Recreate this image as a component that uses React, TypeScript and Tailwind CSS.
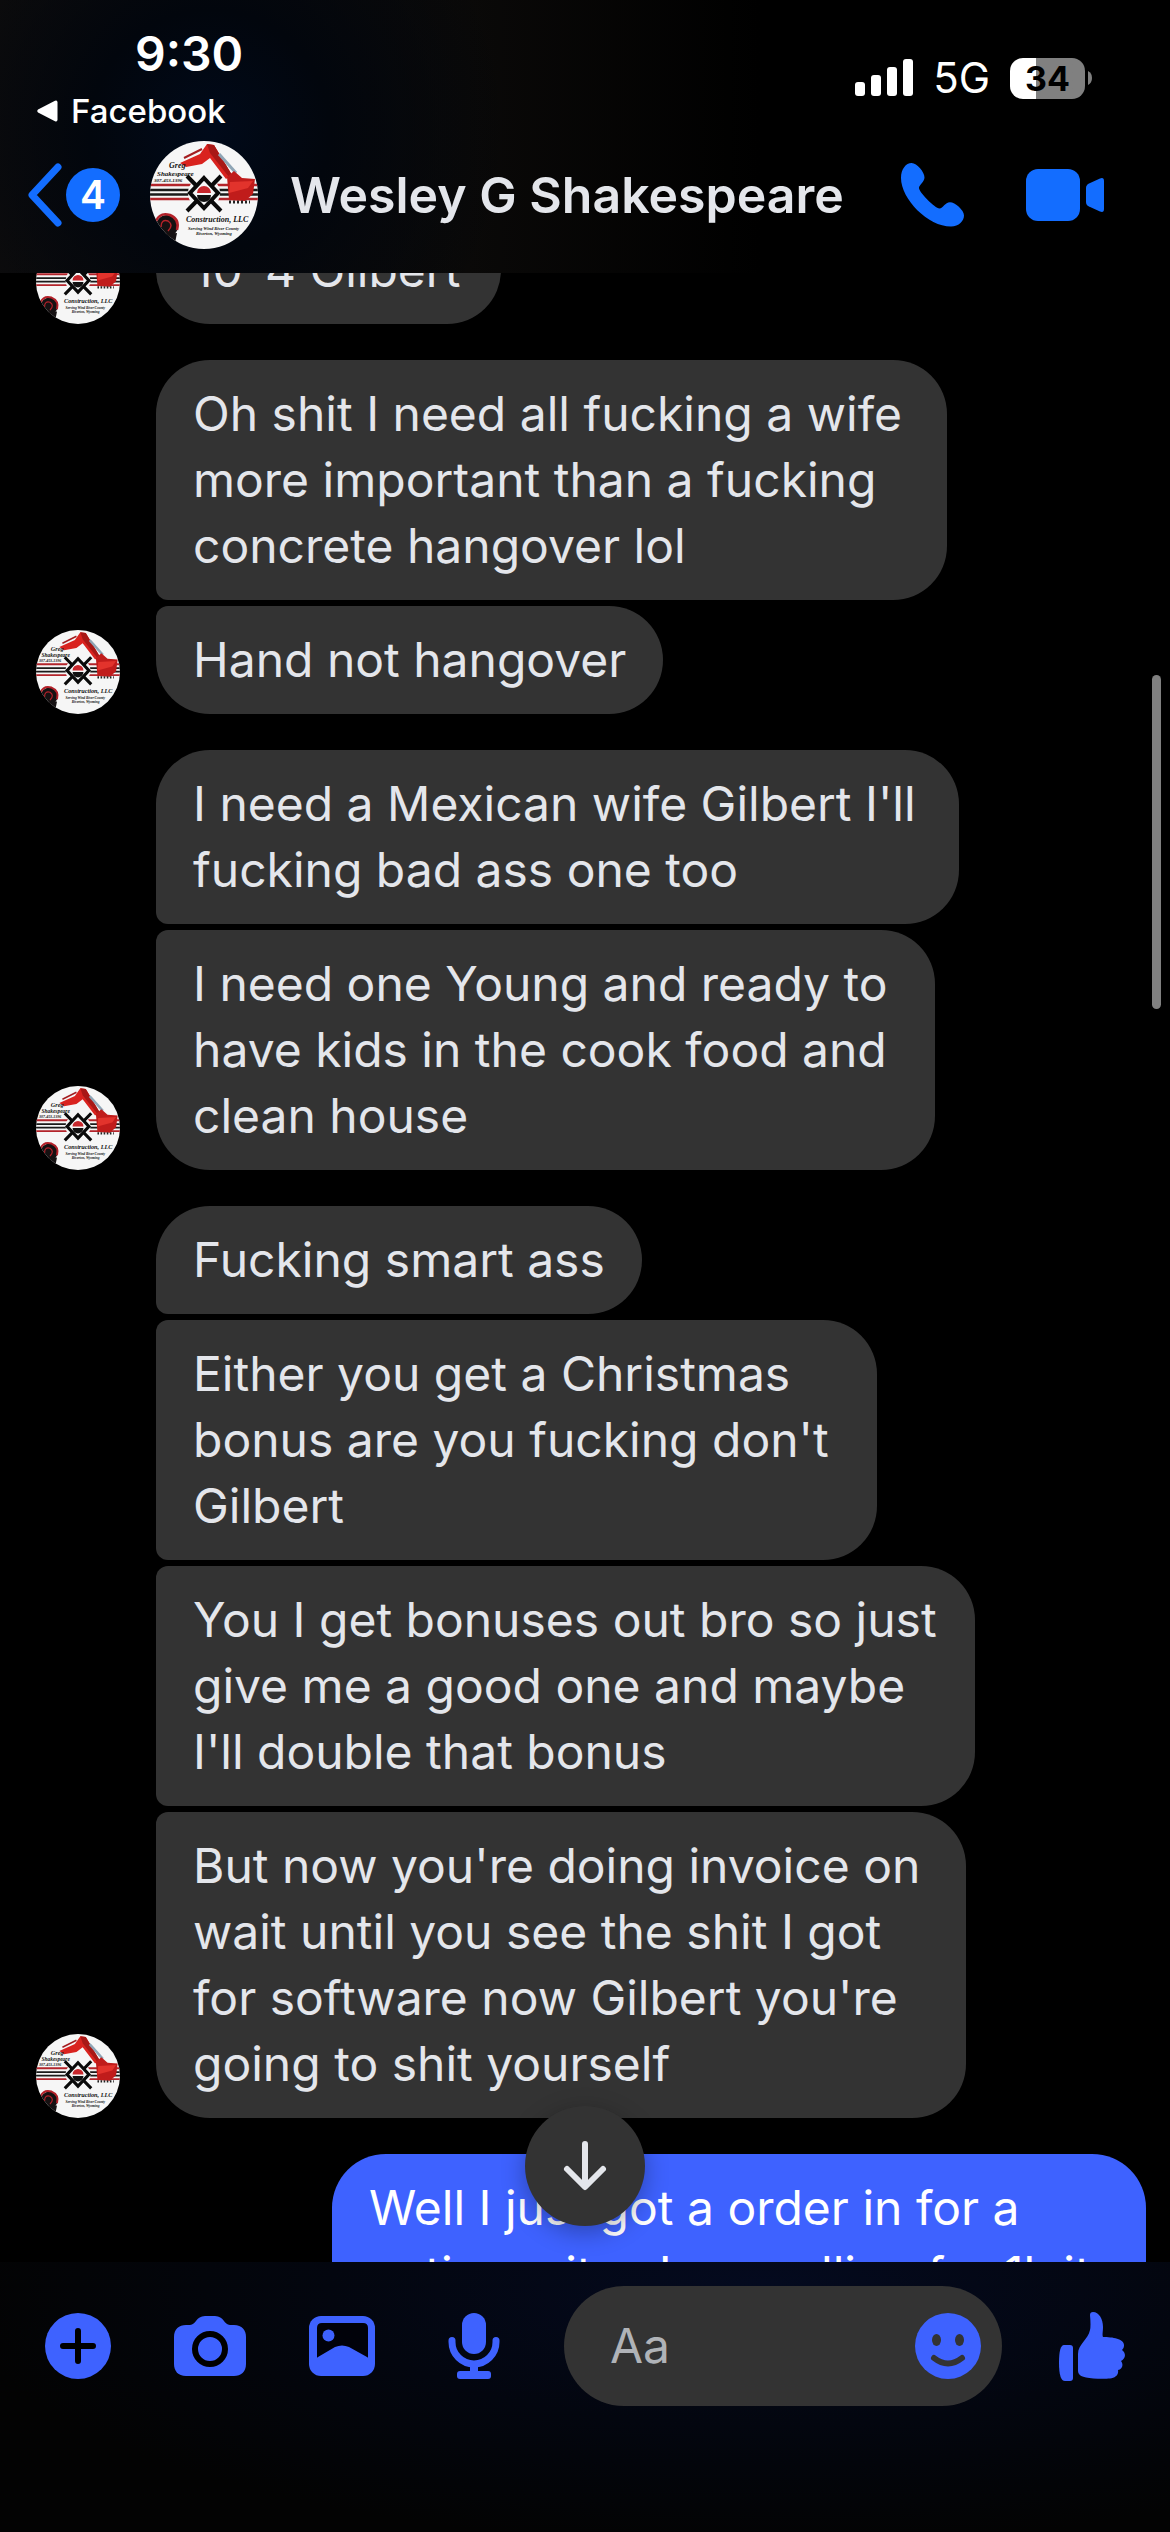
import React, { useState } from 'react';

type Corner = 'single' | 'first' | 'middle' | 'last';

interface Message {
  text: string;
  // multi-line bubbles keep the width the wrapped text asked for
  width?: string;
}

const GROUPS: Message[][] = [
  [{ text: '10-4 Gilbert', width: 'w-[345px]' }],
  [
    { text: 'Oh shit I need all fucking a wife\nmore important than a fucking\nconcrete hangover lol', width: 'w-[791px]' },
    { text: 'Hand not hangover' },
  ],
  [
    { text: "I need a Mexican wife Gilbert I'll\nfucking bad ass one too", width: 'w-[803px]' },
    { text: 'I need one Young and ready to\nhave kids in the cook food and\nclean house', width: 'w-[779px]' },
  ],
  [
    { text: 'Fucking smart ass' },
    { text: "Either you get a Christmas\nbonus are you fucking don't\nGilbert", width: 'w-[721px]' },
    { text: "You I get bonuses out bro so just\ngive me a good one and maybe\nI'll double that bonus", width: 'w-[819px]' },
    { text: "But now you're doing invoice on\nwait until you see the shit I got\nfor software now Gilbert you're\ngoing to shit yourself", width: 'w-[810px]' },
  ],
];

const CORNERS: Record<Corner, string> = {
  single: 'rounded-[54px]',
  first: 'rounded-[54px] rounded-bl-[12px]',
  middle: 'rounded-[54px] rounded-l-[12px]',
  last: 'rounded-[54px] rounded-tl-[12px]',
};

function cornerFor(index: number, count: number): Corner {
  if (count === 1) return 'single';
  if (index === 0) return 'first';
  return index === count - 1 ? 'last' : 'middle';
}

function Avatar({ className }: { className: string }) {
  return (
    <svg viewBox="0 0 108 108" className={`shrink-0 rounded-full ${className}`} role="img" aria-label="Wesley G Shakespeare">
      <rect width="108" height="108" fill="#f6f6f6" />
      {/* stripes */}
      <path d="M0 44H108M0 58H108" stroke="#b3242b" strokeWidth="2.5" />
      <path d="M0 49H108M0 53.500H108" stroke="#1a1a1a" strokeWidth="2.5" />
      {/* excavator arm and bucket */}
      <path d="M34 17L52 8" stroke="#a31d20" strokeWidth="2" />
      <path d="M30 22L50 13L57 3L64 4L82 34L76 38L60 17L52 23L36 26Z" fill="#d9231f" />
      <path d="M57 3L64 4L82 34L79 36L60 12Z" fill="#a81816" />
      <path d="M69 13L86 32" stroke="#8fa5b5" strokeWidth="3" />
      <path d="M77 36L84 30L92 37L105 38L103 53L95 60L79 59Z" fill="#c01c1b" />
      <path d="M80 41L103 40L98 47L79 52Z" fill="#e2332c" />
      <path d="M79 61H100" stroke="#222" strokeWidth="3" strokeDasharray="2 2" />
      {/* brand mark */}
      <circle cx="54" cy="52" r="16" fill="#f6f6f6" />
      <path d="M37 35L71 70M71 35L37 70" stroke="#0a0a0a" strokeWidth="4" />
      <path d="M54 37L68 52L54 67L40 52Z" fill="#f6f6f6" stroke="#0a0a0a" strokeWidth="4" />
      <path d="M47 52A7 7 0 0 1 61 52Z" fill="#c8282d" />
      <path d="M47 54A7 7 0 0 0 61 54Z" fill="#111" />
      {/* rose */}
      <circle cx="17" cy="85" r="11" fill="#151112" />
      <path d="M6 80Q10 71 20 74Q30 78 27 89" fill="none" stroke="#b32129" strokeWidth="2.5" />
      <path d="M11 86Q11 78 18 80Q24 84 18 90" fill="none" stroke="#b32129" strokeWidth="1.5" />
      <path d="M14 93L27 92L25 102Z" fill="#151112" />
      <g fill="#111" fontFamily="Liberation Serif, serif" fontStyle="italic" fontWeight="700">
        <text x="19" y="27" fontSize="8">Greg</text>
        <text x="7" y="35" fontSize="7">Shakespeare</text>
        <text x="4" y="41" fontSize="5">307-453-1396</text>
        <text x="36" y="81" fontSize="8">Construction, LLC</text>
        <text x="38" y="89" fontSize="4.500">Serving Wind River County</text>
        <text x="46" y="94" fontSize="4.500">Riverton, Wyoming</text>
      </g>
    </svg>
  );
}

function StatusBar() {
  return (
    <div className="flex justify-between pt-[24px] pr-[78px] pl-[36px]">
      <div>
        <p className="pl-[99px] text-[48px] leading-[60px] font-semibold text-white">9:30</p>
        <a href="#facebook" className="mt-[6px] flex items-center gap-[13px] text-[33px] leading-[42px] font-medium text-white">
          <svg viewBox="0 0 22 22" className="size-[22px]" fill="#fff" aria-hidden="true">
            <path d="M2 9.500L19 .8Q21.500 0 21.500 2.500V19.500Q21.500 22 19 21.200L2 12.500Q.3 11 2 9.500Z" />
          </svg>
          Facebook
        </a>
      </div>
      <div className="mt-[33px] flex h-[42px] items-center">
        <svg viewBox="0 0 59 42" className="mr-[19px] h-[42px] w-[59px] shrink-0" fill="#fff" aria-label="Signal strength">
          <rect x="0" y="25" width="10" height="14" rx="3" />
          <rect x="16" y="18" width="10" height="21" rx="3" />
          <rect x="32" y="10" width="10" height="29" rx="3" />
          <rect x="48" y="2" width="10" height="37" rx="3" />
        </svg>
        <span className="mr-[20px] text-[42px] leading-[42px] text-white">5G</span>
        <div className="flex h-[41px] w-[75px] items-center justify-center rounded-[13px] bg-linear-to-r from-white from-35% to-[#808080] to-35% text-[34px] leading-[41px] font-bold text-black">
          34
        </div>
        <svg viewBox="0 0 4 14" className="ml-[3px] h-[14px] w-[4px]" fill="#808080" aria-hidden="true">
          <path d="M0 0Q4 2 4 7T0 14Z" />
        </svg>
      </div>
    </div>
  );
}

function ChatHeader() {
  return (
    <header className="relative z-10 h-[273px] shrink-0 bg-[radial-gradient(circle_at_210px_130px,#010a1a_0,#02060d_120px,transparent_300px),linear-gradient(to_right,#0f0d0c_0,#0a0908_40%,#000_65%)]">
      <StatusBar />
      <div className="mt-[9px] flex h-[108px] items-center pr-[66px] pl-[27px]">
        <button type="button" className="flex items-center gap-[4px]" aria-label="Back, 4 unread">
          <svg viewBox="0 0 35 64" className="h-[64px] w-[35px]" fill="none" stroke="#136dff" strokeWidth="7" strokeLinecap="round" strokeLinejoin="round">
            <path d="M31 4L5 32L31 60" />
          </svg>
          <span className="flex size-[54px] items-center justify-center rounded-full bg-[#136dff] text-[39px] font-semibold text-white">4</span>
        </button>
        <Avatar className="ml-[30px] size-[108px]" />
        <h1 className="ml-[32px] flex-1 text-[50px] leading-[60px] font-semibold whitespace-nowrap text-[#e4e6eb]">Wesley G Shakespeare</h1>
        <button type="button" aria-label="Voice call" className="mr-[61px]">
          <svg viewBox="0 0 64 64" className="size-[64px]" fill="#136dff">
            <path d="M0 15C0 6 5 0 10.600 0 16 0 23.500 9 23.500 14.500 23.500 19 18 22 18 25 18 29 34 45.500 38.500 45.500 42 45.500 44 39.300 49 39.300 54 39.300 63 47 63 52.600 63 58 58 63.600 50 63.600 27 63.600 0 36 0 15Z" />
          </svg>
        </button>
        <button type="button" aria-label="Video call">
          <svg viewBox="0 0 78 52" className="h-[52px] w-[78px]" fill="#136dff">
            <rect width="54" height="52" rx="12" />
            <path d="M60 19Q60 16 63 14.500L74 9.500Q78 8 78 12V40Q78 44 74 42.500L63 37.500Q60 36 60 33Z" />
          </svg>
        </button>
      </div>
    </header>
  );
}

function MessageGroup({ messages }: { messages: Message[] }) {
  return (
    <div className="flex items-end gap-[36px] pl-[36px]">
      <Avatar className="size-[84px]" />
      <div className="flex flex-col items-start gap-[6px]">
        {messages.map((message, i) => (
          <p
            key={message.text}
            className={`bg-[#333333] px-[37px] py-[21px] text-[48px] leading-[66px] whitespace-pre text-[#e4e6eb] ${CORNERS[cornerFor(i, messages.length)]} ${message.width ?? ''}`}
          >
            {message.text}
          </p>
        ))}
      </div>
    </div>
  );
}

function Composer() {
  const [draft, setDraft] = useState('');

  return (
    <footer className="relative z-10 h-[270px] shrink-0 bg-[radial-gradient(ellipse_at_65%_10%,#040a1f_0,#03060f_40%,#030303_75%)] pt-[24px]">
      <form className="flex h-[120px] items-center pr-[45px] pl-[45px]" onSubmit={(e) => e.preventDefault()}>
        <button type="button" aria-label="More" className="mr-[63px]">
          <svg viewBox="0 0 66 66" className="size-[66px]">
            <circle cx="33" cy="33" r="33" fill="#3e62ff" />
            <path d="M33 18V48M18 33H48" stroke="#000" strokeWidth="6" strokeLinecap="round" />
          </svg>
        </button>
        <button type="button" aria-label="Camera" className="mr-[63px]">
          <svg viewBox="0 0 72 66" className="h-[66px] w-[72px]">
            <path d="M12 12h4c6 0 6-9 15-9h10c9 0 9 9 15 9h4c8 0 12 5 12 12v27c0 8-5 12-12 12H12C4 63 0 58 0 51V24c0-8 5-12 12-12Z" fill="#3e62ff" />
            <circle cx="36" cy="36" r="15" fill="none" stroke="#000" strokeWidth="6" />
          </svg>
        </button>
        <button type="button" aria-label="Photos" className="mr-[73px]">
          <svg viewBox="0 0 66 66" className="size-[66px]">
            <rect y="3" width="66" height="60" rx="12" fill="#3e62ff" />
            <path d="M8 15q0-5 5-5H54q5 0 5 5V44Q59 45 58 44L40 34Q33 31 26 34L9 44Q8 45 8 44Z" fill="#01020a" />
            <circle cx="19.500" cy="22.500" r="6" fill="#3e62ff" />
          </svg>
        </button>
        <button type="button" aria-label="Voice message" className="mr-[64px]">
          <svg viewBox="0 0 52 66" className="h-[66px] w-[52px]" fill="none" stroke="#3e62ff">
            <rect x="14" width="24" height="41" rx="12" fill="#3e62ff" stroke="none" />
            <path d="M4 27.500V29a22 22 0 0 0 44 0V27.500" strokeWidth="7" strokeLinecap="round" />
            <path d="M26 50V60" strokeWidth="8" />
            <rect x="9" y="58" width="34" height="8" rx="3" fill="#3e62ff" stroke="none" />
          </svg>
        </button>
        <div className="flex h-[120px] min-w-0 flex-1 items-center rounded-full bg-[#333333] pr-[21px] pl-[46px]">
          <input
            type="text"
            aria-label="Message"
            placeholder="Aa"
            value={draft}
            onChange={(e) => setDraft(e.target.value)}
            className="min-w-0 flex-1 bg-transparent text-[48px] leading-[66px] text-[#e4e6eb] outline-none placeholder:text-[#b0b3b8]"
          />
          <button type="button" aria-label="Emoji">
            <svg viewBox="0 0 66 66" className="size-[66px]">
              <circle cx="33" cy="33" r="33" fill="#3e62ff" />
              <ellipse cx="21.500" cy="27" rx="4.500" ry="6" fill="#333" />
              <ellipse cx="44.500" cy="27" rx="4.500" ry="6" fill="#333" />
              <path d="M19 45Q33 56 47 45" fill="none" stroke="#333" strokeWidth="6" strokeLinecap="round" />
            </svg>
          </button>
        </div>
        <button type="button" aria-label="Send a like" className="ml-[57px]">
          <svg viewBox="0 0 66 69" className="h-[69px] w-[66px]" fill="#3e62ff">
            <path d="M5 33h6q3 0 3 3v30q0 3-3 3H6Q0 69 0 51 0 33 5 33Z" />
            <path d="M31 3q0-3 3-3c6 0 10 7 10 15 0 5-1 8 0 10 10 0 22 2 21 9q0 2-2 4c5 4 3 9-1 11 3 4 1 8-3 9 1 5-3 8-8 8.500-5 .5-18 .5-24-1-5-1-8-3-8-7V42c0-10 10-14 12-24Q32 14 31 3Z" />
          </svg>
        </button>
      </form>
    </footer>
  );
}

export default function App() {
  return (
    <div className="flex h-screen flex-col overflow-hidden bg-black font-['Inter','Liberation_Sans',sans-serif]">
      <ChatHeader />
      <main className="relative min-h-0 flex-1">
        {/* the list is pulled up so its first message sits under the header */}
        <div className="h-full overflow-hidden">
          <div className="-mt-[57px] flex flex-col gap-[36px]">
            {GROUPS.map((messages) => (
              <MessageGroup key={messages[0].text} messages={messages} />
            ))}
            <div className="flex justify-end pr-[24px]">
              <p className="w-[814px] rounded-[54px] bg-[#3e62ff] px-[37px] py-[21px] text-[48px] leading-[66px] whitespace-pre text-white">
                {'Well I just got a order in for a\nentire suites I am selling for 1k it'}
              </p>
            </div>
          </div>
        </div>
        <div className="absolute top-[402px] right-[9px] h-[334px] w-[9px] rounded-full bg-[#808080]" />
        <div className="absolute inset-x-0 bottom-[36px] flex justify-center">
          <button
            type="button"
            aria-label="Scroll to latest"
            className="flex size-[120px] items-center justify-center rounded-full bg-[#333333] shadow-[0_6px_24px_rgba(0,0,0,0.3)]"
          >
            <svg viewBox="0 0 48 54" className="h-[54px] w-[48px]" fill="none" stroke="#e4e6eb" strokeWidth="6" strokeLinecap="round" strokeLinejoin="round">
              <path d="M24 5V47M6 30L24 48L42 30" />
            </svg>
          </button>
        </div>
      </main>
      <Composer />
    </div>
  );
}
